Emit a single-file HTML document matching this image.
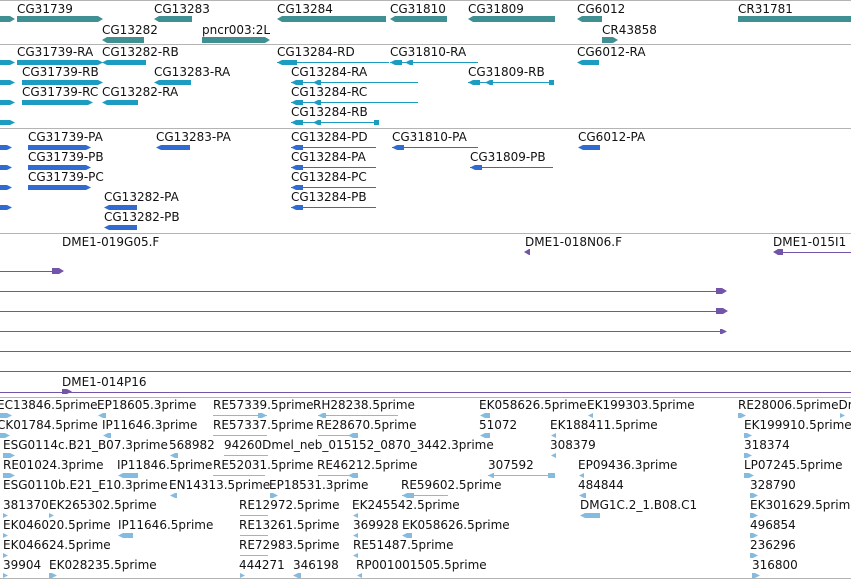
<!DOCTYPE html><html><head><meta charset="utf-8"><style>
body{margin:0;width:851px;height:581px;overflow:hidden;background:#fff;position:relative;font-family:"DejaVu Sans","Liberation Sans",sans-serif}
.t{position:absolute;font-size:12px;line-height:14px;color:#111;white-space:nowrap}
.b{position:absolute}
.hl{position:absolute;left:0;width:851px;height:1px;background:#b4b4b4}
.R{clip-path:polygon(0 0,calc(100% - 5px) 0,100% 50%,calc(100% - 5px) 100%,0 100%)}
.L{clip-path:polygon(5px 0,100% 0,100% 100%,5px 100%,0 50%)}
.g{background:#3f8f93}.x{background:#1b9cc0}.c{background:#2f6bd0}.p{background:#7255a9}.e{background:#83bce0}
</style></head><body>
<div class="hl" style="top:0"></div><div class="hl" style="top:44px"></div><div class="hl" style="top:128px"></div><div class="hl" style="top:233px"></div><div class="hl" style="top:397px"></div><div class="hl" style="top:578px"></div>

<!-- genes -->
<div class="t" style="left:17px;top:2px">CG31739</div><div class="t" style="left:154px;top:2px">CG13283</div><div class="t" style="left:277px;top:2px">CG13284</div><div class="t" style="left:390px;top:2px">CG31810</div><div class="t" style="left:468px;top:2px">CG31809</div><div class="t" style="left:577px;top:2px">CG6012</div><div class="t" style="left:738px;top:2px">CR31781</div>
<div class="b g R" style="left:0;top:16px;width:15px;height:6px"></div>
<div class="b g R" style="left:17px;top:16px;width:86px;height:6px"></div>
<div class="b g L" style="left:154px;top:16px;width:38px;height:6px"></div>
<div class="b g L" style="left:277px;top:16px;width:109px;height:6px"></div>
<div class="b g L" style="left:390px;top:16px;width:57px;height:6px"></div>
<div class="b g L" style="left:468px;top:16px;width:87px;height:6px"></div>
<div class="b g L" style="left:577px;top:16px;width:25px;height:6px"></div>
<div class="b g" style="left:738px;top:16px;width:113px;height:6px"></div>
<div class="t" style="left:102px;top:23px">CG13282</div><div class="t" style="left:202px;top:23px">pncr003:2L</div><div class="t" style="left:602px;top:23px">CR43858</div>
<div class="b g L" style="left:102px;top:37px;width:42px;height:6px"></div>
<div class="b g R" style="left:202px;top:37px;width:68px;height:6px"></div>
<div class="b g R" style="left:602px;top:37px;width:16px;height:6px"></div>

<!-- transcripts -->
<div class="t" style="left:17px;top:45px">CG31739-RA</div><div class="t" style="left:102px;top:45px">CG13282-RB</div><div class="t" style="left:277px;top:45px">CG13284-RD</div><div class="t" style="left:390px;top:45px">CG31810-RA</div><div class="t" style="left:577px;top:45px">CG6012-RA</div>
<div class="t" style="left:22px;top:65px">CG31739-RB</div><div class="t" style="left:154px;top:65px">CG13283-RA</div><div class="t" style="left:291px;top:65px">CG13284-RA</div><div class="t" style="left:468px;top:65px">CG31809-RB</div>
<div class="t" style="left:22px;top:85px">CG31739-RC</div><div class="t" style="left:102px;top:85px">CG13282-RA</div><div class="t" style="left:291px;top:85px">CG13284-RC</div>
<div class="t" style="left:291px;top:105px">CG13284-RB</div>
<div class="b x R" style="left:0;top:60px;width:15px;height:5px"></div><div class="b x R" style="left:0;top:80px;width:15px;height:5px"></div><div class="b x R" style="left:0;top:100px;width:15px;height:5px"></div><div class="b x R" style="left:0;top:120px;width:15px;height:5px"></div>
<div class="b x R" style="left:17px;top:60px;width:86px;height:5px"></div>
<div class="b x R" style="left:22px;top:80px;width:81px;height:5px"></div>
<div class="b x R" style="left:22px;top:100px;width:71px;height:5px"></div>
<div class="b x L" style="left:102px;top:60px;width:44px;height:5px"></div>
<div class="b x L" style="left:102px;top:100px;width:36px;height:5px"></div>
<div class="b x L" style="left:154px;top:80px;width:37px;height:5px"></div>
<div class="b x L" style="left:277px;top:60px;width:20px;height:5px"></div><div class="b x" style="left:277px;top:62px;width:112px;height:1px"></div>
<div class="b x" style="left:291px;top:82px;width:127px;height:1px"></div><div class="b x L" style="left:291px;top:80px;width:12px;height:5px"></div><div class="b x L" style="left:313px;top:80px;width:8px;height:5px"></div>
<div class="b x" style="left:291px;top:102px;width:127px;height:1px"></div><div class="b x L" style="left:291px;top:100px;width:12px;height:5px"></div><div class="b x L" style="left:313px;top:100px;width:8px;height:5px"></div>
<div class="b x" style="left:291px;top:122px;width:88px;height:1px"></div><div class="b x L" style="left:291px;top:120px;width:12px;height:5px"></div><div class="b x L" style="left:313px;top:120px;width:8px;height:5px"></div><div class="b x" style="left:374px;top:120px;width:5px;height:5px"></div>
<div class="b x" style="left:390px;top:62px;width:88px;height:1px"></div><div class="b x L" style="left:390px;top:60px;width:12px;height:5px"></div><div class="b x L" style="left:405px;top:60px;width:8px;height:5px"></div>
<div class="b x" style="left:468px;top:82px;width:86px;height:1px"></div><div class="b x L" style="left:468px;top:80px;width:12px;height:5px"></div><div class="b x L" style="left:485px;top:80px;width:8px;height:5px"></div><div class="b x" style="left:549px;top:80px;width:5px;height:5px"></div>
<div class="b x L" style="left:577px;top:60px;width:22px;height:5px"></div>

<!-- CDS -->
<div class="t" style="left:28px;top:130px">CG31739-PA</div><div class="t" style="left:156px;top:130px">CG13283-PA</div><div class="t" style="left:291px;top:130px">CG13284-PD</div><div class="t" style="left:392px;top:130px">CG31810-PA</div><div class="t" style="left:578px;top:130px">CG6012-PA</div>
<div class="t" style="left:28px;top:150px">CG31739-PB</div><div class="t" style="left:291px;top:150px">CG13284-PA</div><div class="t" style="left:470px;top:150px">CG31809-PB</div>
<div class="t" style="left:28px;top:170px">CG31739-PC</div><div class="t" style="left:291px;top:170px">CG13284-PC</div>
<div class="t" style="left:104px;top:190px">CG13282-PA</div><div class="t" style="left:291px;top:190px">CG13284-PB</div>
<div class="t" style="left:104px;top:210px">CG13282-PB</div>
<div class="b c R" style="left:0;top:145px;width:12px;height:5px"></div><div class="b c R" style="left:0;top:165px;width:12px;height:5px"></div><div class="b c R" style="left:0;top:185px;width:12px;height:5px"></div><div class="b c R" style="left:0;top:205px;width:12px;height:5px"></div>
<div class="b c R" style="left:28px;top:145px;width:63px;height:5px"></div><div class="b c R" style="left:28px;top:165px;width:63px;height:5px"></div><div class="b c R" style="left:28px;top:185px;width:63px;height:5px"></div>
<div class="b c L" style="left:156px;top:145px;width:34px;height:5px"></div>
<div class="b c L" style="left:104px;top:205px;width:33px;height:5px"></div><div class="b c L" style="left:104px;top:225px;width:33px;height:5px"></div>
<div class="b c" style="left:291px;top:147px;width:85px;height:1px"></div><div class="b c" style="left:291px;top:167px;width:85px;height:1px"></div><div class="b c" style="left:291px;top:187px;width:85px;height:1px"></div><div class="b c" style="left:291px;top:207px;width:85px;height:1px"></div>
<div class="b c L" style="left:291px;top:145px;width:12px;height:5px"></div><div class="b c L" style="left:291px;top:165px;width:12px;height:5px"></div><div class="b c L" style="left:291px;top:185px;width:12px;height:5px"></div><div class="b c L" style="left:291px;top:205px;width:12px;height:5px"></div>
<div class="b c" style="left:392px;top:147px;width:86px;height:1px"></div><div class="b c L" style="left:392px;top:145px;width:12px;height:5px"></div>
<div class="b c" style="left:470px;top:167px;width:83px;height:1px"></div><div class="b c L" style="left:470px;top:165px;width:12px;height:5px"></div>
<div class="b c L" style="left:578px;top:145px;width:22px;height:5px"></div>

<!-- BAC -->
<div class="t" style="left:62px;top:235px">DME1-019G05.F</div><div class="t" style="left:525px;top:235px">DME1-018N06.F</div><div class="t" style="left:773px;top:235px">DME1-015I1</div>
<div class="b p" style="left:0;top:271px;width:60px;height:1px"></div><div class="b p R" style="left:52px;top:268px;width:12px;height:6px"></div>
<div class="b p L" style="left:524px;top:249px;width:6px;height:6px"></div>
<div class="b p" style="left:776px;top:252px;width:75px;height:1px"></div><div class="b p L" style="left:773px;top:249px;width:10px;height:6px"></div>
<div class="b p" style="left:0;top:291px;width:720px;height:1px"></div><div class="b p R" style="left:716px;top:288px;width:11px;height:6px"></div>
<div class="b p" style="left:0;top:311px;width:720px;height:1px"></div><div class="b p R" style="left:716px;top:308px;width:12px;height:6px"></div>
<div class="b p" style="left:0;top:331px;width:722px;height:1px"></div><div class="b p R" style="left:720px;top:329px;width:7px;height:5px"></div>
<div class="b p" style="left:0;top:351px;width:851px;height:1px"></div><div class="b p" style="left:0;top:371px;width:851px;height:1px"></div><div class="b p" style="left:0;top:392px;width:851px;height:1px"></div>
<div class="t" style="left:62px;top:375px">DME1-014P16</div><div class="b p R" style="left:62px;top:389px;width:10px;height:5px"></div>

<!-- EST -->
<div class="t" style="left:-3px;top:398px">EC13846.5prime</div><div class="t" style="left:97px;top:398px">EP18605.3prime</div><div class="t" style="left:213px;top:398px">RE57339.5prime</div><div class="t" style="left:313px;top:398px">RH28238.5prime</div><div class="t" style="left:479px;top:398px">EK058626.5prime</div><div class="t" style="left:587px;top:398px">EK199303.5prime</div><div class="t" style="left:738px;top:398px">RE28006.5primeDm</div>
<div class="t" style="left:-3px;top:418px">CK01784.5prime</div><div class="t" style="left:102px;top:418px">IP11646.3prime</div><div class="t" style="left:213px;top:418px">RE57337.5prime</div><div class="t" style="left:316px;top:418px">RE28670.5prime</div><div class="t" style="left:479px;top:418px">51072</div><div class="t" style="left:550px;top:418px">EK188411.5prime</div><div class="t" style="left:744px;top:418px">EK199910.5prime</div>
<div class="t" style="left:3px;top:438px">ESG0114c.B21_B07.3prime</div><div class="t" style="left:169px;top:438px">568982</div><div class="t" style="left:224px;top:438px">94260Dmel_neb_015152_0870_3442.3prime</div><div class="t" style="left:550px;top:438px">308379</div><div class="t" style="left:744px;top:438px">318374</div>
<div class="t" style="left:3px;top:458px">RE01024.3prime</div><div class="t" style="left:117px;top:458px">IP11846.5prime</div><div class="t" style="left:213px;top:458px">RE52031.5prime</div><div class="t" style="left:317px;top:458px">RE46212.5prime</div><div class="t" style="left:488px;top:458px">307592</div><div class="t" style="left:578px;top:458px">EP09436.3prime</div><div class="t" style="left:744px;top:458px">LP07245.5prime</div>
<div class="t" style="left:3px;top:478px">ESG0110b.E21_E10.3prime</div><div class="t" style="left:169px;top:478px">EN14313.5prime</div><div class="t" style="left:269px;top:478px">EP18531.3prime</div><div class="t" style="left:401px;top:478px">RE59602.5prime</div><div class="t" style="left:578px;top:478px">484844</div><div class="t" style="left:750px;top:478px">328790</div>
<div class="t" style="left:3px;top:498px">381370</div><div class="t" style="left:49px;top:498px">EK265302.5prime</div><div class="t" style="left:239px;top:498px">RE12972.5prime</div><div class="t" style="left:352px;top:498px">EK245542.5prime</div><div class="t" style="left:580px;top:498px">DMG1C.2_1.B08.C1</div><div class="t" style="left:750px;top:498px">EK301629.5prime</div>
<div class="t" style="left:3px;top:518px">EK046020.5prime</div><div class="t" style="left:118px;top:518px">IP11646.5prime</div><div class="t" style="left:239px;top:518px">RE13261.5prime</div><div class="t" style="left:353px;top:518px">369928</div><div class="t" style="left:402px;top:518px">EK058626.5prime</div><div class="t" style="left:750px;top:518px">496854</div>
<div class="t" style="left:3px;top:538px">EK046624.5prime</div><div class="t" style="left:239px;top:538px">RE72983.5prime</div><div class="t" style="left:353px;top:538px">RE51487.5prime</div><div class="t" style="left:750px;top:538px">236296</div>
<div class="t" style="left:3px;top:558px">39904</div><div class="t" style="left:49px;top:558px">EK028235.5prime</div><div class="t" style="left:239px;top:558px">444271</div><div class="t" style="left:293px;top:558px">346198</div><div class="t" style="left:356px;top:558px">RP001001505.5prime</div><div class="t" style="left:752px;top:558px">316800</div>
<!-- EST glyphs -->
<div class="b e R" style="left:0;top:413px;width:12px;height:5px"></div><div class="b e L" style="left:98px;top:413px;width:8px;height:5px"></div><div class="b e" style="left:213px;top:415px;width:54px;height:1px"></div><div class="b e R" style="left:258px;top:413px;width:9px;height:5px"></div><div class="b e" style="left:318px;top:415px;width:80px;height:1px"></div><div class="b e L" style="left:318px;top:413px;width:8px;height:5px"></div><div class="b e L" style="left:480px;top:413px;width:10px;height:5px"></div><div class="b e L" style="left:588px;top:413px;width:5px;height:5px"></div><div class="b e R" style="left:738px;top:413px;width:8px;height:5px"></div><div class="b e R" style="left:840px;top:413px;width:5px;height:5px"></div>
<div class="b e R" style="left:0;top:433px;width:10px;height:5px"></div><div class="b e L" style="left:103px;top:433px;width:8px;height:5px"></div><div class="b e" style="left:213px;top:435px;width:54px;height:1px"></div><div class="b e" style="left:318px;top:435px;width:40px;height:1px"></div><div class="b e L" style="left:348px;top:433px;width:10px;height:5px"></div><div class="b e L" style="left:480px;top:433px;width:10px;height:5px"></div><div class="b e L" style="left:551px;top:433px;width:5px;height:5px"></div><div class="b e R" style="left:744px;top:433px;width:8px;height:5px"></div>
<div class="b e R" style="left:3px;top:453px;width:12px;height:5px"></div><div class="b e L" style="left:170px;top:453px;width:8px;height:5px"></div><div class="b e" style="left:224px;top:455px;width:44px;height:1px"></div><div class="b e L" style="left:551px;top:453px;width:5px;height:5px"></div><div class="b e R" style="left:744px;top:453px;width:8px;height:5px"></div>
<div class="b e R" style="left:3px;top:473px;width:12px;height:5px"></div><div class="b e L" style="left:118px;top:473px;width:20px;height:5px"></div><div class="b e" style="left:213px;top:475px;width:52px;height:1px"></div><div class="b e" style="left:318px;top:475px;width:40px;height:1px"></div><div class="b e L" style="left:348px;top:473px;width:10px;height:5px"></div><div class="b e" style="left:488px;top:475px;width:66px;height:1px"></div><div class="b e L" style="left:488px;top:473px;width:6px;height:5px"></div><div class="b e" style="left:548px;top:473px;width:7px;height:5px"></div><div class="b e L" style="left:579px;top:473px;width:5px;height:5px"></div><div class="b e R" style="left:744px;top:473px;width:10px;height:5px"></div>
<div class="b e L" style="left:170px;top:493px;width:7px;height:5px"></div><div class="b e R" style="left:270px;top:493px;width:8px;height:5px"></div><div class="b e" style="left:402px;top:495px;width:46px;height:1px"></div><div class="b e L" style="left:402px;top:493px;width:12px;height:5px"></div><div class="b e L" style="left:579px;top:493px;width:7px;height:5px"></div><div class="b e R" style="left:750px;top:493px;width:8px;height:5px"></div>
<div class="b e R" style="left:3px;top:513px;width:5px;height:5px"></div><div class="b e R" style="left:49px;top:513px;width:5px;height:5px"></div><div class="b e" style="left:240px;top:515px;width:28px;height:1px"></div><div class="b e L" style="left:353px;top:513px;width:5px;height:5px"></div><div class="b e L" style="left:580px;top:513px;width:20px;height:5px"></div><div class="b e R" style="left:750px;top:513px;width:8px;height:5px"></div>
<div class="b e R" style="left:3px;top:533px;width:5px;height:5px"></div><div class="b e L" style="left:118px;top:533px;width:15px;height:5px"></div><div class="b e" style="left:240px;top:535px;width:28px;height:1px"></div><div class="b e L" style="left:353px;top:533px;width:5px;height:5px"></div><div class="b e L" style="left:402px;top:533px;width:10px;height:5px"></div><div class="b e R" style="left:750px;top:533px;width:8px;height:5px"></div>
<div class="b e R" style="left:3px;top:553px;width:5px;height:5px"></div><div class="b e" style="left:240px;top:555px;width:28px;height:1px"></div><div class="b e L" style="left:353px;top:553px;width:5px;height:5px"></div><div class="b e R" style="left:750px;top:553px;width:8px;height:5px"></div>
<div class="b e R" style="left:3px;top:573px;width:5px;height:5px"></div><div class="b e R" style="left:49px;top:573px;width:8px;height:5px"></div><div class="b e R" style="left:240px;top:573px;width:5px;height:5px"></div><div class="b e L" style="left:293px;top:573px;width:8px;height:5px"></div><div class="b e L" style="left:357px;top:573px;width:5px;height:5px"></div><div class="b e R" style="left:752px;top:573px;width:8px;height:5px"></div>
</body></html>
